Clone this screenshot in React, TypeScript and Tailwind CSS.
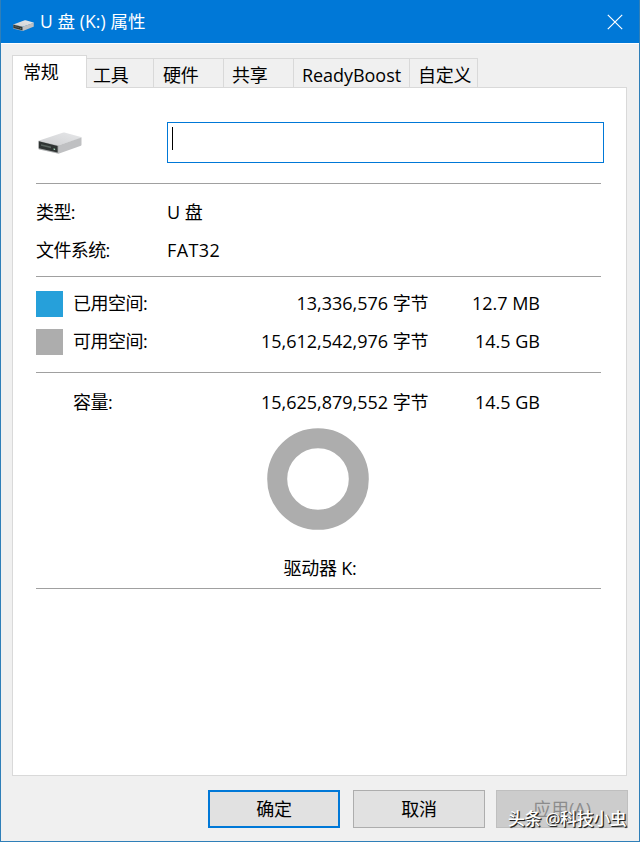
import { useState } from 'react';
import clsx from 'clsx';

type SpaceRow = { label: string; swatch?: string; bytes: string; size: string };

const TABS = [
  { label: '常规', width: 'w-[75px]', pad: 'pl-[10px]' },
  { label: '工具', width: 'w-[67px]', pad: 'pl-[6px]' },
  { label: '硬件', width: 'w-[70px]', pad: 'pl-[9px]' },
  { label: '共享', width: 'w-[70px]', pad: 'pl-[8px]' },
  { label: 'ReadyBoost', width: 'w-[116px]', pad: 'pl-[8px] tracking-[-0.05px]' },
  { label: '自定义', width: 'w-[68px]', pad: 'pl-[8px]' },
];

const USAGE: SpaceRow[] = [
  { label: '已用空间:', swatch: 'bg-[#26a0da]', bytes: '13,336,576', size: '12.7 MB' },
  { label: '可用空间:', swatch: 'bg-[#adadad]', bytes: '15,612,542,976', size: '14.5 GB' },
];

const CAPACITY: SpaceRow = { label: '容量:', bytes: '15,625,879,552', size: '14.5 GB' };

/** External drive enclosure, seen from the front left corner. */
function DriveIcon({ className }: { className?: string }) {
  return (
    <svg viewBox="0 0 44 22" preserveAspectRatio="none" className={className} aria-hidden="true">
      <defs>
        <linearGradient id="drive-top" x1="0" y1="1" x2="1" y2="0">
          <stop offset="0" stopColor="#cfd0d2" />
          <stop offset="1" stopColor="#e6e7e9" />
        </linearGradient>
      </defs>
      <path d="M.5 8.8 24.6.7q.9-.3 1.8-.1L43 5.1q.5.2.5.8L20 13.6z" fill="url(#drive-top)" />
      <path d="m20 13.6 23.5-8.1v7.3q0 .6-.6.9L20.5 21.8z" fill="#bfc0c2" />
      <path d="M.5 8.7 20.7 13.6v8.2L1.2 17.6q-.7-.2-.7-.9z" fill="#a9abac" />
      <path d="m.8 9.3 18.8 4.6v6.6L.8 16.2z" fill="#2f3433" />
      <path d="m3 12.2 10 2.4v1.6L3 13.8z" fill="#59645f" />
      <path d="m15.5 16.4 1.6.4v1.2l-1.6-.4z" fill="#b9f5d0" />
    </svg>
  );
}

function Divider() {
  return <div className="h-px w-[565px] bg-[#a0a0a0]" />;
}

function Usage({ row }: { row: SpaceRow }) {
  return (
    <div className="flex h-[38px] items-center">
      <span className={clsx('h-[26px] w-[27px] flex-none', row.swatch)} />
      <span className="w-[110px] flex-none pb-0.5 pl-[10px] tracking-[-0.5px]">{row.label}</span>
      <span className="w-[255px] flex-none pb-0.5 text-right">
        {row.bytes} <span className="tracking-[-0.4px]">字节</span>
      </span>
      <span className="w-[112px] flex-none pb-0.5 text-right">{row.size}</span>
    </div>
  );
}

export default function App() {
  const [tab, setTab] = useState('常规');
  const [label, setLabel] = useState('');

  return (
    <div className="flex h-[842px] w-[640px] flex-col overflow-hidden border border-t-0 border-[#2f7fb8] bg-[#f0f0f0] font-['Open_Sans','Noto_Sans_CJK_SC',sans-serif] text-[18px] leading-[26px] text-black">
      <header className="-mx-px flex h-[43px] flex-none items-center bg-[#0078d7] pl-[13px] text-white">
        <DriveIcon className="mt-[7px] h-[11px] w-[21px]" />
        <h1 className="ml-[6px] flex-1 pb-0.5 text-[17.5px] tracking-[0.1px]">U 盘 (K:) 属性</h1>
        <button type="button" aria-label="关闭" className="mr-[17px]">
          <svg viewBox="0 0 16 16" className="h-4 w-4" fill="none" stroke="#fff" strokeWidth="1.2">
            <path d="m.8.8 14.4 14.4M15.2.8.8 15.2" />
          </svg>
        </button>
      </header>

      <nav className="flex h-[45px] flex-none items-end border-t border-white pl-[11px] tracking-[-0.3px]">
        {TABS.map((t) => (
          <button
            key={t.label}
            type="button"
            onClick={() => setTab(t.label)}
            className={clsx(
              'flex flex-none items-center whitespace-nowrap border-[#d9d9d9] text-left',
              t.width,
              t.pad,
              tab === t.label
                ? 'z-10 h-[33px] border border-b-0 bg-white'
                : 'mb-px h-[29px] border-t border-r pt-1',
            )}
          >
            {t.label}
          </button>
        ))}
      </nav>

      <main className="-mt-px ml-[11px] flex h-[689px] w-[615px] flex-none flex-col border border-[#d9d9d9] bg-white pl-[23px]">
        <div className="flex h-[95px] flex-none items-center">
          <DriveIcon className="mt-[15px] ml-[2px] h-[22px] w-[44px]" />
          <div className="mt-[14px] ml-[85px] flex h-[41px] w-[437px] items-start border border-[#0078d7] pt-1 pl-1">
            <span className="h-[23px] w-px bg-black" />
            <input
              value={label}
              onChange={(e) => setLabel(e.target.value)}
              aria-label="卷标"
              className="w-full bg-transparent outline-none"
            />
          </div>
        </div>
        <Divider />

        <dl className="grid h-[92px] flex-none grid-cols-[131px_1fr] content-start gap-y-3 pt-[15px]">
          <dt className="tracking-[-0.6px]">类型:</dt>
          <dd>U 盘</dd>
          <dt className="tracking-[-0.6px]">文件系统:</dt>
          <dd className="tracking-[0.4px]">FAT32</dd>
        </dl>
        <Divider />

        <div className="h-[95px] flex-none pt-[8px]">
          {USAGE.map((row) => <Usage key={row.label} row={row} />)}
        </div>
        <Divider />

        <div className="flex h-[215px] flex-none flex-col pt-[11px]">
          <Usage row={CAPACITY} />
          <div className="flex w-[565px] flex-col items-center">
            <svg viewBox="0 0 102 102" className="mt-[6px] mr-[1px] h-[102px] w-[102px]">
              <circle cx="51" cy="51" r="40.8" fill="none" stroke="#adadad" strokeWidth="20" />
            </svg>
            <span className="mt-[25px] ml-[3px] tracking-[-0.2px]">驱动器 K:</span>
          </div>
        </div>
        <Divider />
      </main>

      <footer className="flex flex-1 items-start pt-[14px] pl-[207px]">
        <button type="button" className="h-[38px] w-[132px] border-2 border-[#0078d7] bg-[#e1e1e1] tracking-[-0.3px]">确定</button>
        <button type="button" className="ml-[13px] h-[38px] w-[132px] border border-[#adadad] bg-[#e1e1e1] tracking-[-0.3px]">取消</button>
        <div className="relative ml-[11px]">
          <button type="button" disabled className="h-[38px] w-[132px] border border-[#bfbfbf] bg-[#cccccc] text-[#8c8c8c]">
            应用(A)
          </button>
          <span className="absolute top-[16px] left-[12px] whitespace-nowrap text-[17px] font-medium tracking-[-0.4px] text-white [text-shadow:1px_1px_1px_#222,1px_1px_0_#333]">
            头条 @科技小虫
          </span>
        </div>
      </footer>
    </div>
  );
}
